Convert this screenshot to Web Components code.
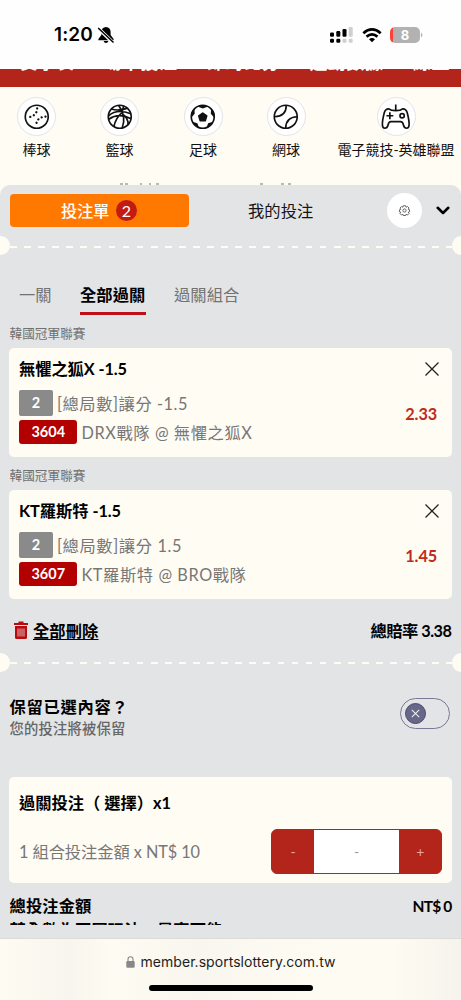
<!DOCTYPE html>
<html lang="zh-Hant">
<head>
<meta charset="utf-8">
<title>投注單</title>
<style>
html,body{margin:0;padding:0}
body{width:461px;height:1000px;overflow:hidden;background:#fffcf3;font-family:Lato,"Noto Sans CJK TC",sans-serif;font-size:16.3px;color:#151515}
</style>
</head>
<body>
<bet-app></bet-app>
<script>
const define = (name, html, init) => customElements.define(name, class extends HTMLElement {
  connectedCallback() {
    if (this.shadowRoot) return;
    const root = this.attachShadow({ mode: 'open' });
    const t = document.createElement('template');
    t.innerHTML = typeof html === 'function' ? html(this) : html;
    root.appendChild(t.content.cloneNode(true));
    if (init) init(this, root);
  }
});

/* Single line of text, tracked so that it spans the width given in "w". */
define('fit-text', `<style>:host{display:block;white-space:nowrap;flex:none}</style><span><slot></slot></span>`,
  (el, root) => {
    const w = parseFloat(el.getAttribute('w'));
    if (!w) return;
    el.style.width = w + 'px';
    const s = root.querySelector('span'), n = [...el.textContent].length;
    const d = (w - s.getBoundingClientRect().width) / n;
    s.style.letterSpacing = d.toFixed(3) + 'px';
  });

define('status-bar', `<style>
:host{display:flex;height:69px;box-sizing:border-box;padding:0 38px 0 54px;background:#fefefe;align-items:center;justify-content:space-between}
div{display:flex;align-items:center}fit-text{font:600 19px/24px Inter,sans-serif;color:#000}
svg{display:block}
.bat{width:30px;height:16px;border-radius:5px;background:linear-gradient(90deg,#ff4238 2.6px,#b2b2b2 2.6px);color:#fff;font:700 13px/16px Inter,sans-serif;text-align:center;margin-left:9px}
</style>
<div><fit-text w="39">1:20</fit-text><svg style="margin-left:4px" width="18" height="18" viewBox="0 0 18 18"><path d="M9 1c-3 0-4.600 2.200-4.600 5v3L1.400 13v1.200h15.200V13l-3-4V6c0-2.800-1.600-5-4.600-5zM6.600 15h4.800c-.5 1.300-1.200 2-2.400 2s-1.900-.7-2.400-2z"/><path d="M1.200 2.200l15 14.500" stroke="#fefefe" stroke-width="3.400"/><path d="M1.200 2l15.300 14.500" stroke="#000" stroke-width="1.500"/></svg></div>
<div><svg width="24" height="16" viewBox="0 0 24 16"><g fill="#000"><rect x="0" y="5.500" width="4" height="4.200" rx="1.200"/><rect x="6.300" y="4" width="4" height="5.700" rx="1.200"/><rect x="12.500" y="2" width="4" height="7.700" rx="1.200"/><rect x="0" y="11.800" width="4" height="4" rx="1.200"/><rect x="6.300" y="11.800" width="4" height="4" rx="1.200"/></g><g fill="#cfcfcf"><rect x="18.700" y="0" width="4" height="9.700" rx="1.200"/><rect x="12.500" y="11.800" width="4" height="4" rx="1.200"/><rect x="18.700" y="11.800" width="4" height="4" rx="1.200"/></g></svg>
<svg style="margin-left:8px" width="20" height="16" viewBox="0 0 20 16" fill="none" stroke="#000" stroke-width="2.700"><path d="M1.300 6.200q8.700-7.600 17.400 0M4.500 9.600q5.500-4.500 11 0"/><path d="M7 12.200q3-2.200 6 0l-3 3z" fill="#000" stroke="none"/></svg>
<div class="bat" style="margin-left:8px"><span style="width:30px">8</span></div><svg width="3" height="6"><path d="M1 .5q3 2.500 0 5z" fill="#b2b2b2"/></svg></div>`);

define('top-nav', `<style>:host{display:flex;height:18px;background:#b3241a;overflow:hidden;color:#fff;font-weight:700;font-size:18px;line-height:24px;padding-left:20px;gap:29.500px;align-items:flex-start}fit-text{margin-top:-19.500px}</style>
<fit-text w="54">賽事表</fit-text><fit-text w="74">場中投注</fit-text><fit-text w="73">即時比分</fit-text><fit-text w="74">運動數據</fit-text><fit-text w="37">線上</fit-text>`);

const icons = {
  baseball: `<circle cx="13" cy="13" r="11.700"/><g stroke-dasharray=".1 3.900" stroke-width="2.300" stroke-linecap="round"><path d="M13.400 4.500Q13.500 12 4 13.600M22 12.800Q12.500 13.500 12.500 22"/></g>`,
  basketball: `<circle cx="13" cy="13" r="11.700"/><path d="M4.500 5Q11 7.500 21 4.200M1.600 12Q10 4.500 24.300 10M1.800 15.500Q12 8.500 24.500 15M12 1.500Q20 13 15.500 24.500M15 9Q9 14 7 23M16 10.500q6 4 5.500 11M17 1.700Q16.500 5 15 9"/>`,
  soccer: `<circle cx="13" cy="13" r="11.700"/><path fill="#111" d="M13 9.300l4 2.900-1.500 4.800h-5l-1.500-4.800z"/><path fill="#111" stroke="none" d="M7.500 2.500L13 4.500l5.500-2Q13-.5 7.500 2.500zM21.500 4.500l-.3 5.500 3.600 4Q26 8 21.500 4.500zM4.500 4.500l.3 5.500-3.600 4Q0 8 4.500 4.500zM2.500 18l5 1.500 2 5.500Q4.500 23 2.500 18zM23.500 18l-5 1.500-2 5.500q5-2 7-7z"/>`,
  tennis: `<circle cx="13" cy="13" r="11.700"/><path d="M13.500 1.500Q13.500 12.500 1.500 13M24.700 13Q13 13.500 13 24.700"/>`,
  esports: `<path d="M6 5Q2.500 4.800 1.300 9-.8 17-.6 21.500C-.4 26 4 25.500 5 22q.7-4 3-4h10q2.300 0 3 4c1 3.500 5.400 4 5.600-.5Q26.800 17 24.700 9 23.500 4.800 20 5q-2 1.800-7 1.800T6 5z" /><path d="M13 .5v6M7 8.500v7M3.500 12h7"/><circle cx="19.500" cy="12" r="2.200"/>`
};
define('sport-item', el => `<style>:host{display:flex;flex-direction:column;align-items:center;flex:none}
i{width:37px;height:37px;border:1px solid #e3e3ea;border-radius:50%;background:#fff;display:flex;align-items:center;justify-content:center}
svg{overflow:visible;display:block}div{font-size:14px;line-height:20px;margin-top:4px;color:#111}</style>
<i><svg width="25.500" height="25.500" viewBox="0 0 26 26" fill="none" stroke="#111" stroke-width="1.700" stroke-linejoin="round">${icons[el.getAttribute('icon')]}</svg></i><div><slot></slot></div>`);

define('sport-list', `<style>:host{display:grid;grid-template-columns:73px 93px 74px 92px 128px;height:97.500px;padding-top:10px;box-sizing:border-box;position:relative}
svg{position:absolute;left:0;top:95px}</style>
<sport-item icon="baseball"><fit-text w="28">棒球</fit-text></sport-item><sport-item icon="basketball"><fit-text w="28">籃球</fit-text></sport-item><sport-item icon="soccer"><fit-text w="28">足球</fit-text></sport-item><sport-item icon="tennis"><fit-text w="28">網球</fit-text></sport-item><sport-item icon="esports"><fit-text w="117">電子競技-英雄聯盟</fit-text></sport-item>
<svg width="461" height="3"><path d="M120 2h3m2 0h3m12 0h2m7 0h2m5 0h3M260 2h3m18 0h3m4 0h3" stroke="#777" stroke-width="1"/></svg>`);

define('slip-tabs', `<style>:host{display:flex;height:52px;align-items:center;padding-left:9.500px}
.on{width:179px;height:33px;border-radius:4px;background:#ff7800;color:#fff;display:flex;align-items:center;justify-content:center;gap:7px;font-weight:500}
fit-text{margin-top:-2px}
b{width:21px;height:21px;border-radius:50%;background:#c31a12;font-size:16px;line-height:21px;text-align:center;font-weight:400}
.my{margin-left:59.500px}.gear{margin-left:73px;width:35px;height:35px;border-radius:50%;background:#fff;display:flex;align-items:center;justify-content:center}
.chev{margin-left:14px}</style>
<div class="on"><fit-text w="48">投注單</fit-text><b>2</b></div><fit-text class="my" w="65.500">我的投注</fit-text>
<div class="gear"><svg width="11" height="11" viewBox="0 0 22 22" fill="none" stroke="#555" stroke-width="1.800" stroke-linejoin="round"><path d="M8.500 1.500h5l.7 3 2.800-1.500 3 3-1.500 2.800 2.500.7v4l-2.500.8L20 17l-3 3-2.800-1.500-.7 2.500h-5l-.7-2.500L5 20l-3-3 1.500-2.700L1 13.500v-4l2.500-.7L2 6l3-3 2.800 1.500z"/><circle cx="11" cy="11" r="3.200"/></svg></div>
<svg class="chev" width="14" height="9" viewBox="0 0 14 9" fill="none" stroke="#000" stroke-width="2.600" stroke-linecap="round" stroke-linejoin="round"><path d="M1.700 1.800L7 7l5.300-5.200"/></svg>`);

define('tear-line', `<style>:host{display:flex;height:20px;align-items:center;justify-content:space-between;overflow:hidden}
i{width:19px;height:19px;border-radius:50%;background:#fffcf3;flex:none}.l{margin-left:-9.500px}.r{margin-right:-9.500px}
div{flex:1;height:2px;margin-top:2px;background:repeating-linear-gradient(90deg,#fffcf3 0 6.700px,transparent 6.700px 14.080px)}</style><i class="l"></i><div></div><i class="r"></i>`);

define('mode-tabs', `<style>:host{display:flex;box-sizing:border-box;padding:17.500px 0 0 19px;height:59.500px;gap:28.500px;color:#737373;line-height:24px}
.on{color:#000;font-weight:700;border-bottom:3.500px solid #bd1119;height:28.500px}</style>
<fit-text w="32.500">一關</fit-text><div class="on"><fit-text w="65.500">全部過關</fit-text></div><fit-text w="65.500">過關組合</fit-text>`);

define('bet-card', el => { const a = k => el.getAttribute(k); return `<style>
:host{display:block;height:142.300px}
.lg{font-size:12.600px;line-height:18px;color:#707070;margin-left:9.500px;height:22.700px}
.card{margin:0 9.300px;height:109.500px;border-radius:5px;background:#fffcf3;display:flex;justify-content:space-between;box-sizing:border-box;padding:9px 12.500px 0 9.700px}
.t{font-weight:700;line-height:24px;color:#000;height:33px}.r{display:flex;align-items:center;color:#777;gap:4px;height:26px}
b{background:#8a8a8a;color:#fff;width:34px;height:26px;line-height:26px;text-align:center;border-radius:2px;font-size:14.500px}
b.id{background:#b30000;width:58.500px;height:24px;line-height:24px;border-radius:3px}
.r+.r{margin-top:3px}.side{display:flex;flex-direction:column;align-items:flex-end;padding-top:5px}
.odd{color:#c02b20;font-weight:700;margin:27px 2px 0 0;line-height:22px}</style>
<div class="lg"><fit-text w="76">韓國冠軍聯賽</fit-text></div>
<div class="card"><div><div class="t"><fit-text w="${a('tw')}">${a('t')}</fit-text></div>
<div class="r"><b>2</b><fit-text w="${a('mw')}">${a('m')}</fit-text></div>
<div class="r"><b class="id">${a('no')}</b><fit-text w="${a('vw')}">${a('v')}</fit-text></div></div>
<div class="side"><svg width="14" height="14" viewBox="0 0 14 14" stroke="#222" stroke-width="1.300"><path d="M.5.5l13 13M13.500.5l-13 13"/></svg><div class="odd"><fit-text w="32">${a('odd')}</fit-text></div></div></div>`; });

define('slip-actions', `<style>:host{display:flex;height:42.900px;box-sizing:border-box;align-items:center;justify-content:space-between;padding:0 9.500px 3px 14px;font-weight:700;color:#000}
div{display:flex;align-items:center;gap:5px}.u{text-decoration:underline;text-underline-offset:2px;text-decoration-thickness:1.200px;text-decoration-skip-ink:none}</style>
<div><svg width="14" height="18" viewBox="0 0 14 18"><path d="M4.500 2V.5h5V2H14v2H0V2zM1 5h12v11.500q0 1.500-1.500 1.500h-9Q1 18 1 16.500z" fill="#b90a0f"/><path d="M4 7.500v8M6 7.500v8M8 7.500v8M10 7.500v8" stroke="#e3e4e6" stroke-width=".8"/></svg><span class="u"><fit-text w="65.500">全部刪除</fit-text></span></div><fit-text w="81">總賠率 3.38</fit-text>`);

define('keep-toggle', `<style>:host{display:flex;height:104.500px;box-sizing:border-box;padding:22.500px 11.500px 0 9.500px;justify-content:space-between}
.a{font-weight:700;color:#000;line-height:24px}.b{font-size:14.300px;color:#666;line-height:20px;font-weight:500}
.sw{margin-top:3px;width:50px;height:31px;border:1px solid #7a7897;border-radius:16px;box-sizing:border-box;display:flex;align-items:center;padding-left:4px}
.k{width:21px;height:21px;border-radius:50%;background:#67678a;border:1px solid #494968;box-sizing:border-box;display:flex;align-items:center;justify-content:center}</style>
<div><div class="a"><fit-text w="119">保留已選內容？</fit-text></div><div class="b"><fit-text w="116">您的投注將被保留</fit-text></div></div>
<div class="sw"><div class="k"><svg width="9" height="9" viewBox="0 0 9 9" stroke="#eee" stroke-width="1.100"><path d="M.8.8l7.400 7.400M8.200.8L.8 8.200"/></svg></div></div>`);

define('stake-card', `<style>:host{display:block;margin:0 9.300px;height:106.300px;box-sizing:border-box;border-radius:5px;background:#fffcf3;padding:14px 9.500px 0 9.700px}
.t{font-weight:700;color:#000;line-height:24px;height:38px}.r{display:flex;align-items:center;justify-content:space-between;color:#777}
.s{display:flex;width:171px;height:45px;box-sizing:border-box;border:1px solid #b3241a;border-radius:6px;overflow:hidden;background:#b3241a;color:#e9a49e;font-size:14px;line-height:43px;text-align:center}
.s span{flex:1}.s .v{flex:none;width:85px;background:#fff;color:#999}</style>
<div class="t"><fit-text w="152">過關投注（ 選擇）x1</fit-text></div><div class="r"><fit-text w="181">1 組合投注金額 x NT$ 10</fit-text><div class="s"><span>-</span><span class="v">-</span><span>+</span></div></div>`);

define('total-row', `<style>:host{display:block;padding:11px 9.500px 0;height:56px;box-sizing:border-box;font-weight:700;color:#000;background:#e3e4e6}
.r{display:flex;justify-content:space-between;line-height:24px;height:24px}.c{height:7px;overflow:hidden;line-height:24px}.n{font-size:15.500px}</style>
<div class="r"><fit-text w="82">總投注金額</fit-text><fit-text class="n" w="39">NT$ 0</fit-text></div><div class="c"><fit-text w="213">若全數為不同玩法，最高可能</fit-text></div>`);

define('browser-bar', `<style>:host{display:flex;flex-direction:column;align-items:center;height:62px;box-sizing:border-box;border-top:1px solid #dcdbd5;background:linear-gradient(90deg,#fefbf2,#f7f5ed 15%,#fefbf2 24%,#f8f6ee 43%,#fdfaf2 60%,#fefbf2 85%,#f5f3eb)}
div{display:flex;align-items:center;gap:6px;margin-top:12px;height:22px;font:14px/22px Inter,sans-serif;color:#1d1d1d}
i{width:164px;height:6.500px;background:#000;border-radius:4px;margin-top:11.500px}</style>
<div><svg width="9" height="12" viewBox="0 0 9 12"><rect x=".3" y="5" width="8.400" height="6.700" rx="1.200" fill="#888"/><path d="M2 5.500V3.300Q2 .8 4.500.8T7 3.300v2.200" fill="none" stroke="#888" stroke-width="1.100"/></svg><fit-text w="195">member.sportslottery.com.tw</fit-text></div><i></i>`);

define('bet-app', `<style>:host{display:block;width:461px;height:1000px;overflow:hidden;background:#fffcf3}
section{height:753.500px;box-sizing:border-box;background:#e3e4e6;border-radius:10px 10px 0 0;overflow:hidden}</style>
<status-bar></status-bar><top-nav></top-nav><sport-list></sport-list>
<section><slip-tabs></slip-tabs><tear-line style="margin-top:-1px"></tear-line><mode-tabs style="margin-top:10px"></mode-tabs>
<bet-card t="無懼之狐X -1.5" tw="108" m="[總局數]讓分 -1.5" mw="131" no="3604" v="DRX戰隊 @ 無懼之狐X" vw="171" odd="2.33"></bet-card>
<bet-card t="KT羅斯特 -1.5" tw="102" m="[總局數]讓分 1.5" mw="125" no="3607" v="KT羅斯特 @ BRO戰隊" vw="165" odd="1.45"></bet-card>
<slip-actions></slip-actions><tear-line></tear-line><keep-toggle></keep-toggle><stake-card></stake-card><total-row></total-row></section>
<browser-bar></browser-bar>`);
</script>
</body>
</html>
